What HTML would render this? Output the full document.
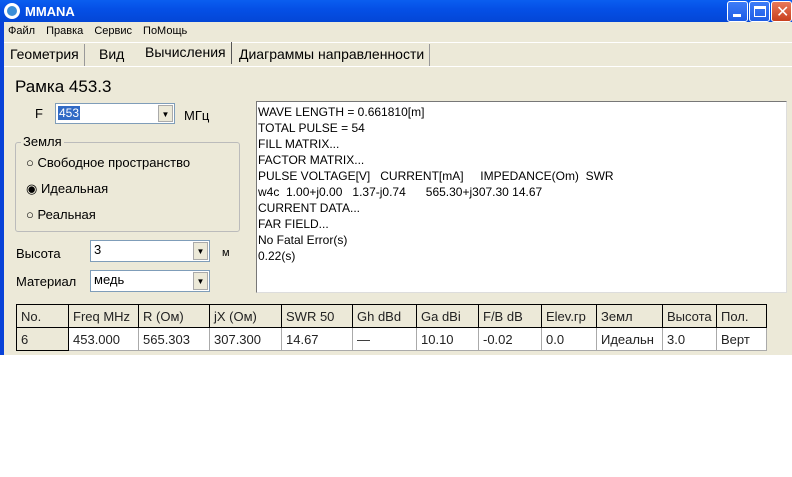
<!DOCTYPE html>
<html><head><meta charset="utf-8"><style>
*{margin:0;padding:0;box-sizing:border-box}
body{width:792px;height:477px;background:#fff;position:relative;overflow:hidden;font-family:"Liberation Sans","DejaVu Sans",sans-serif;font-size:13px;color:#000}
.a{position:absolute}
#win{left:0;top:0;width:792px;height:355px;background:#ece9d8;border-left:4px solid #0842d8}
#tb{left:0;top:0;width:792px;height:22px;background:linear-gradient(#0a5ef0,#0550e6 40%,#0346d6);color:#fff;font-weight:bold;font-size:13px}
.btn{top:1px;width:21px;height:21px;border:1px solid #fff;border-radius:3px;background:linear-gradient(#3d7cf7,#1e5de6)}
.tab{top:44px;height:22px;font-size:14px;padding:2px 5px;border-right:1px solid #999}
table{border-collapse:collapse;font-size:13px}
td{border:1px solid #000;height:23px;padding:0 4px;color:#222}
.g td{border-color:#aaa}
</style></head><body>
<div id="win" class="a"></div>
<div id="tb" class="a"><div class="a" style="left:4px;top:3px;width:16px;height:16px;border-radius:8px;background:#fff"><div class="a" style="left:3px;top:3px;width:10px;height:10px;border-radius:5px;background:#3a8ed8"></div></div><span class="a" style="left:25px;top:4px">MMANA</span>
<div class="a btn" style="left:727px"><div class="a" style="left:5px;top:12px;width:8px;height:3px;background:#fff"></div></div>
<div class="a btn" style="left:749px"><div class="a" style="left:4px;top:4px;width:12px;height:11px;border:1px solid #fff;border-top:3px solid #fff"></div></div>
<div class="a btn" style="left:771px;background:linear-gradient(#e8785a,#c8401e)"><span class="a" style="left:4px;top:0px;font-size:16px">✕</span></div>
</div>
<div class="a" style="top:25px;left:8px;font-size:11px;word-spacing:8px">Файл Правка Сервис ПоМощь</div>
<div class="a" style="left:4px;top:42px;width:788px;height:1px;background:#fff"></div>
<div class="a" style="left:4px;top:66px;width:788px;height:1px;background:#fff"></div>
<div class="a tab" style="left:5px">Геометрия</div>
<div class="a tab" style="left:92px;width:47px;border-right:0;padding-left:7px">Вид</div>
<div class="a tab" style="left:140px;top:42px;border-right:1px solid #555">Вычисления</div>
<div class="a tab" style="left:234px">Диаграммы направленности</div>
<div class="a" style="left:15px;top:77px;font-size:17px">Рамка 453.3</div>
<div class="a" style="left:35px;top:106px">F</div>
<div class="a" style="left:55px;top:103px;width:120px;height:21px;background:#fff;border:1px solid #7f9db9"><span style="background:#316ac5;color:#fff;margin:2px;padding:0 1px;font-size:12px;position:relative;top:1px">453</span><div class="a" style="right:1px;top:1px;width:15px;height:17px;background:#ece9d8;border:1px solid #aaa;font-size:8px;text-align:center;line-height:17px">▼</div></div>
<div class="a" style="left:184px;top:108px">МГц</div>
<div class="a" style="left:15px;top:142px;width:225px;height:90px;border:1px solid #bbb;border-radius:3px"></div>
<div class="a" style="left:21px;top:134px;background:#ece9d8;padding:0 2px">Земля</div>
<div class="a" style="left:26px;top:155px">○ Свободное пространство</div>
<div class="a" style="left:26px;top:181px">◉ Идеальная</div>
<div class="a" style="left:26px;top:207px">○ Реальная</div>
<div class="a" style="left:16px;top:246px">Высота</div>
<div class="a" style="left:90px;top:240px;width:120px;height:22px;background:#fff;border:1px solid #7f9db9;padding:1px 3px">3<div class="a" style="right:1px;top:1px;width:15px;height:18px;background:#ece9d8;border:1px solid #aaa;font-size:8px;text-align:center;line-height:18px">▼</div></div>
<div class="a" style="left:222px;top:247px;font-size:11px">м</div>
<div class="a" style="left:16px;top:274px">Материал</div>
<div class="a" style="left:90px;top:270px;width:120px;height:22px;background:#fff;border:1px solid #7f9db9;padding:1px 3px">медь<div class="a" style="right:1px;top:1px;width:15px;height:18px;background:#ece9d8;border:1px solid #aaa;font-size:8px;text-align:center;line-height:18px">▼</div></div>
<div class="a" style="left:256px;top:101px;width:531px;height:192px;background:#fff;border:1px solid #777;border-right-color:#ddd;border-bottom-color:#ddd;padding:2px 1px;font-size:12px;line-height:16px">WAVE LENGTH = 0.661810[m]<br>TOTAL PULSE = 54<br>FILL MATRIX...<br>FACTOR MATRIX...<br>PULSE VOLTAGE[V] &nbsp;&nbsp;CURRENT[mA] &nbsp;&nbsp;&nbsp;&nbsp;IMPEDANCE(Om) &nbsp;SWR<br>w4c &nbsp;1.00+j0.00 &nbsp;&nbsp;1.37-j0.74 &nbsp;&nbsp;&nbsp;&nbsp;&nbsp;565.30+j307.30 14.67<br>CURRENT DATA...<br>FAR FIELD...<br>No Fatal Error(s)<br>0.22(s)</div>
<div class="a" style="left:4px;top:298px;width:788px;height:57px;background:#ece9d8"></div>
<table class="a" style="left:16px;top:304px">
<tr style="background:#ece9d8"><td style="width:52px">No.</td><td style="width:70px">Freq MHz</td><td style="width:71px">R (Ом)</td><td style="width:72px">jX (Ом)</td><td style="width:71px">SWR 50</td><td style="width:64px">Gh dBd</td><td style="width:62px">Ga dBi</td><td style="width:63px">F/B dB</td><td style="width:55px">Elev.гр</td><td style="width:66px">Земл</td><td style="width:54px">Высота</td><td style="width:50px">Пол.</td></tr>
<tr class="g" style="background:#fff"><td style="background:#ece9d8;border-color:#000">6</td><td>453.000</td><td>565.303</td><td>307.300</td><td>14.67</td><td>—</td><td>10.10</td><td>-0.02</td><td>0.0</td><td>Идеальн</td><td>3.0</td><td>Верт</td></tr>
</table>
</body></html>
